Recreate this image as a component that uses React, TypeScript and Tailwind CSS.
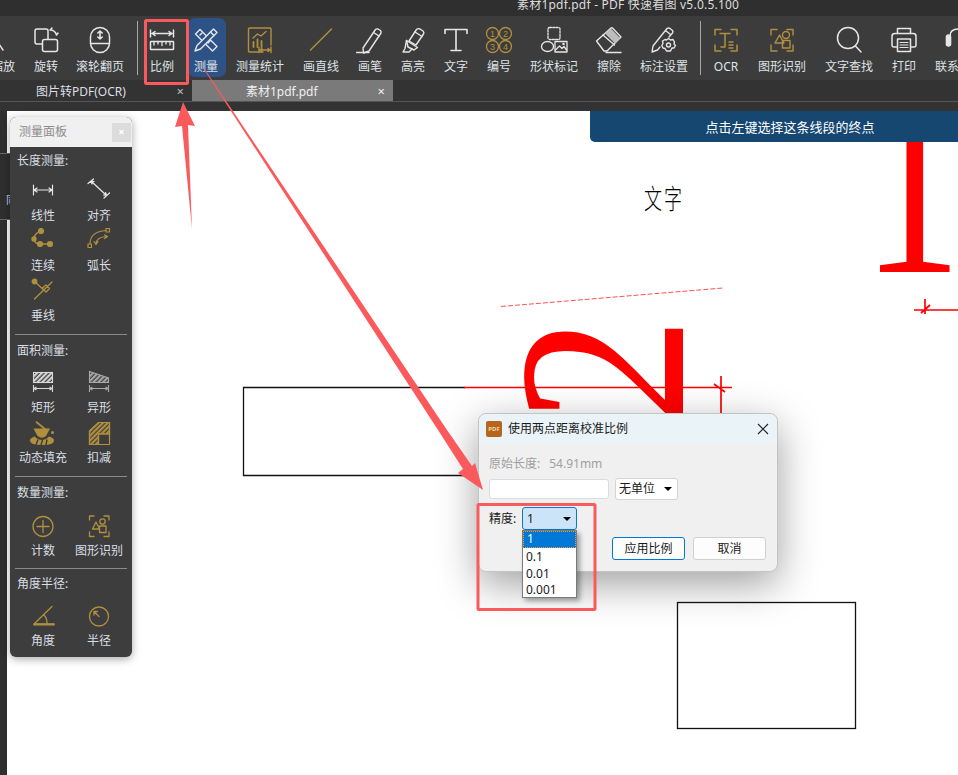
import React from "react";

const W = "#e6e6e6";
const G = "#b0903f";

function I({ c = W, s = 28, w = 1.5, children }: { c?: string; s?: number; w?: number; children: React.ReactNode }) {
  return (
    <svg width={s} height={s} viewBox={`0 0 ${s} ${s}`} fill="none" stroke={c} strokeWidth={w} strokeLinecap="round" strokeLinejoin="round">
      {children}
    </svg>
  );
}

const Corners = () => (
  <path d="M3 9V3.5H9M19 3.5H25V9M3 19V25H9M19 25H25V19" />
);

const tools: { label: string; w: string; icon: React.ReactNode }[] = [
  { label: "缩放", w: "w-[46px]", icon: <I><path d="M10 18 L14 24" /></I> },
  {
    label: "旋转", w: "w-[40px]", icon: (
      <I><rect x="3" y="3" width="13" height="15" rx="2" /><rect x="10.5" y="13.5" width="15" height="12" rx="2" fill="#3c3c3c" /><path d="M18 4 Q23 4 24.5 9M18 4 L20 2M24.5 9 L26 7" /></I>
    ),
  },
  {
    label: "滚轮翻页", w: "w-[68px]", icon: (
      <I><rect x="4.5" y="1.5" width="19" height="25" rx="9.5" /><path d="M4.5 17.5 H23.5" /><path d="M14 5V13M11.8 7 L14 5 L16.2 7M11.8 11 L14 13 L16.2 11" strokeWidth={1.6} /></I>
    ),
  },
  { label: "sep", w: "w-[6px]", icon: null },
  {
    label: "比例", w: "w-[44px]", icon: (
      <I><path d="M2.5 4V11M25.5 4V11M4 7.5H24M7 5.5 L4 7.5 L7 9.5M21 5.5 L24 7.5 L21 9.5" /><rect x="2.5" y="15.5" width="23" height="8" rx="0.5" /><path d="M6 15.5V19M10 15.5V18M14 15.5V19.5M18 15.5V18M22 15.5V19" strokeWidth={1.3} /></I>
    ),
  },
  {
    label: "测量", w: "w-[44px]", icon: (
      <I w={1.4}><path d="M3.5 8 L8 3.5 L25 20.5 L20.5 25 Z" /><path d="M8 9 L10 7M12 13 L14 11M16 17 L18 15" /><path d="M21.5 3 L25 6.5 L8.5 23 L3 25 L5 19.5 Z" fill="#2c5286" /><path d="M18.5 6 L22 9.5" /></I>
    ),
  },
  {
    label: "测量统计", w: "w-[64px]", icon: (
      <I c={G} w={1.4}><path d="M17 26 H3.5 Q2.5 26 2.5 25 V3 Q2.5 2 3.5 2 H24 Q25 2 25 3 V19" /><path d="M7 12 L11.5 8 L15 10 L20 5.5" /><path d="M7.5 21V16M11.5 21V13.5M15.5 21V15" strokeWidth={1.8} /><path d="M13 21.5V26.5M25 21V26.5M14 24H24M16 22.5 L14 24 L16 25.5M22 22.5 L24 24 L22 25.5" /></I>
    ),
  },
  { label: "画直线", w: "w-[58px]", icon: <I c={G}><path d="M3.5 24 L24.5 3" /></I> },
  {
    label: "画笔", w: "w-[40px]", icon: (
      <I w={1.4}><path d="M7 22 L19.5 3.5 Q20.5 2.5 22 3 L24.5 4.5 Q25.5 5.5 25 7 L13 25 L7.5 27 Z" /><path d="M17.5 6.5 L23 10" /><path d="M0.5 26.5 H13" /></I>
    ),
  },
  {
    label: "高亮", w: "w-[46px]", icon: (
      <I w={1.4}><path d="M10 15 L17.5 3.5 Q19 2 21 3 L24 5 Q25.5 6.5 24.5 8 L17 19 Z" /><path d="M7.5 14.5 L18.5 21.5 L15 24 L9 21 Z" /><path d="M7.5 14.5 L6 22.5 L4 26 L10 26 L13 23" /><path d="M16 6 L23 10.5" /></I>
    ),
  },
  {
    label: "文字", w: "w-[40px]", icon: (
      <I w={1.6}><path d="M3 7.5 V3.5 H25 V7.5M14 3.5 V24.5M9 24.5 H19" /></I>
    ),
  },
  {
    label: "编号", w: "w-[46px]", icon: (
      <svg width="28" height="28" viewBox="0 0 28 28" fill="none" stroke={G} strokeWidth="1.3">
        <circle cx="7.5" cy="7.5" r="6" /><circle cx="20.5" cy="7.5" r="6" /><circle cx="7.5" cy="20.5" r="6" /><circle cx="20.5" cy="20.5" r="6" />
        <g fill={G} stroke="none" fontSize="9" textAnchor="middle" fontFamily="'Liberation Sans',sans-serif">
          <text x="7.5" y="10.8">1</text><text x="20.5" y="10.8">2</text><text x="7.5" y="23.8">3</text><text x="20.5" y="23.8">4</text>
        </g>
      </svg>
    ),
  },
  {
    label: "形状标记", w: "w-[64px]", icon: (
      <I w={1.3}><rect x="8" y="1.5" width="12" height="12" rx="1.5" strokeDasharray="2 1.3" /><ellipse cx="7.5" cy="20.5" rx="6" ry="5" /><rect x="15" y="15.5" width="12" height="10.5" /><path d="M15.5 24 L19.5 20 L22 22.5 L24 20.5 L26.5 24" /><circle cx="23.5" cy="18" r="0.6" /></I>
    ),
  },
  {
    label: "擦除", w: "w-[46px]", icon: (
      <I w={1.4}><path d="M1.5 15 L16 2 Q17 1.5 18 2.5 L26 11 L12 25 H9 Z" fill="none" /><path d="M8 9 L19.5 19" /><path d="M10 7.5 L16 2.5 L25 12 L20 17.5 Z" fill="#bdbdbd" stroke="none" /><path d="M11 26.5 H26" /></I>
    ),
  },
  {
    label: "标注设置", w: "w-[64px]", icon: (
      <I w={1.4}><path d="M3 20 L17 2.5 Q18.5 1.5 20 2.5 L22.5 4.5 Q23.5 6 22.5 7 L19 11M3 20 L2 26 L7.5 24 L10 21M15.5 4.5 L20.5 8.5" /><circle cx="18.5" cy="19" r="2" /><path d="M18.5 12.5 L20.5 14 L23 13.5 L24.5 16 L24 18 L25.5 19.5 L24 22 L22 22 L20.5 25 H16.5 L15 22.5 L13 22 L11.8 19.5 L13 17.5 L12.5 15 L15 13.5 L16.5 14 Z" /></I>
    ),
  },
  { label: "sep", w: "w-[8px]", icon: null },
  {
    label: "OCR", w: "w-[44px]", icon: (
      <I c={G} w={1.5}><Corners /><path d="M8 7.5 H18M13 7.5 V21M9 21 H13M17 16 H21M17 19 H21M17 22 H21" /></I>
    ),
  },
  {
    label: "图形识别", w: "w-[68px]", icon: (
      <I c={G} w={1.4}><Corners /><path d="M11.5 9 L16 17 H7 Z" /><circle cx="18" cy="9" r="3.5" /><rect x="14.5" y="14.5" width="7.5" height="7.5" /></I>
    ),
  },
  {
    label: "文字查找", w: "w-[66px]", icon: (
      <I w={1.5}><circle cx="13" cy="12" r="10.5" /><path d="M20.5 20 L26 26" /></I>
    ),
  },
  {
    label: "打印", w: "w-[44px]", icon: (
      <I w={1.5}><path d="M7.5 7 V2.5 H20.5 V7" /><path d="M6.5 21 H4 Q2 21 2 19 V10 Q2 7.5 5 7.5 H23 Q26 7.5 26 10 V19 Q26 21 24 21 H21.5" /><rect x="7.5" y="13" width="13" height="12.5" /><path d="M10 16.5 H18M10 19 H18M10 21.5 H18" strokeWidth={1.2} /></I>
    ),
  },
  {
    label: "联系我们", w: "w-[66px]", icon: (
      <I w={1.6}><path d="M5 14 V10 Q5 3 14 3 Q23 3 23 10 V14" /><rect x="1.5" y="9" width="4" height="11" rx="2" fill={W} /></I>
    ),
  },
];

function Tool({ t }: { t: (typeof tools)[number] }) {
  if (t.label === "sep") {
    return (
      <div className={`${t.w} shrink-0 flex justify-center pt-[5px]`}>
        <div className="w-px h-[54px] bg-[#a8a8a8]" />
      </div>
    );
  }
  const active = t.label === "测量";
  return (
    <div className={`${t.w} shrink-0 relative flex flex-col items-center pt-[10px]`}>
      {active && <div className="absolute left-[4px] right-[2px] top-[2px] h-[59px] rounded-[7px] bg-[#2c5286]" />}
      <div className="relative h-[28px] w-[28px]">{t.icon}</div>
      <div className="relative mt-[4px] text-[12px] leading-[18px] whitespace-nowrap text-[#dfe3e6]">{t.label}</div>
    </div>
  );
}

const Hatch = ({ id, c }: { id: string; c: string }) => (
  <defs>
    <pattern id={id} width="3.4" height="3.4" patternUnits="userSpaceOnUse" patternTransform="rotate(45)">
      <rect width="1.6" height="3.4" fill={c} />
    </pattern>
  </defs>
);

const panel: { title: string; pt: string; gap: string; after: string; items: { label: string; icon: React.ReactNode }[] }[] = [
  {
    title: "长度测量:", pt: "pt-[1px]", gap: "mt-[3px]", after: "mt-[7px]", items: [
      { label: "线性", icon: <I w={1.2}><path d="M4.5 7 V17M23.5 7 V17M5 12 H23M8 10 L5 12 L8 14M20 10 L23 12 L20 14" /></I> },
      { label: "对齐", icon: <I w={1.2}><path d="M3 5.5 L8.5 1M19 20 L24.5 15M6 3 L21.5 17.5M9 3.5 L6 3 L7 6M20.5 14.5 L21.5 17.5 L18.5 17" /></I> },
      {
        label: "连续", icon: (
          <I c={G} w={1.4}><path d="M11 3 Q4 7 5 12 Q6 15 9 16 H20" /><circle cx="12" cy="3" r="2.4" fill={G} /><circle cx="5" cy="11" r="2" fill={G} /><circle cx="11" cy="16" r="2.4" fill={G} /><circle cx="21" cy="16" r="2.4" fill={G} /></I>
        ),
      },
      {
        label: "弧长", icon: (
          <I c={G} w={1.2}><rect x="21" y="0.5" width="3.5" height="3.5" /><rect x="3" y="16" width="3.5" height="3.5" /><path d="M5 16 Q5 3.5 21 2.5" /><path d="M11 16 Q11 9 22 8.5M19.5 7 L22.5 8.5 L19.5 10.5M9 13.5 L11 16.5 L13 13.5" /></I>
        ),
      },
      {
        label: "垂线", icon: (
          <I c={G} w={1.3}><circle cx="5.5" cy="3.5" r="2.3" fill={G} /><path d="M5.5 3.5 L17 14M5.5 21 L23 4M13 10.5 L17 7 L20.5 10.5 L17 14" /></I>
        ),
      },
    ],
  },
  {
    title: "面积测量:", pt: "pt-[3px]", gap: "mt-[5px]", after: "mt-[7px]", items: [
      {
        label: "矩形", icon: (
          <svg width="28" height="28" viewBox="0 0 28 28" fill="none" stroke="#d8d8d8" strokeWidth="1.1">
            <Hatch id="h1" c="#cfcfcf" />
            <rect x="4.5" y="2.5" width="19" height="10" fill="url(#h1)" />
            <path d="M4.5 15 V22M23.5 15 V22M5 18.5 H23M7.5 17 L5 18.5 L7.5 20M20.5 17 L23 18.5 L20.5 20" />
          </svg>
        ),
      },
      {
        label: "异形", icon: (
          <svg width="28" height="28" viewBox="0 0 28 28" fill="none" stroke="#a8a8a8" strokeWidth="1.1">
            <Hatch id="h2" c="#a8a8a8" />
            <path d="M4.5 1.5 L23.5 8 V12.5 H4.5 Z" fill="url(#h2)" />
            <path d="M4.5 15 V22M23.5 15 V22M5 18.5 H23M7.5 17 L5 18.5 L7.5 20M20.5 17 L23 18.5 L20.5 20" />
          </svg>
        ),
      },
      {
        label: "动态填充", icon: (
          <svg width="28" height="28" viewBox="0 0 28 28" fill={G} stroke="none">
            <path d="M7.5 1 L18 9.5 L16.5 10.5 L6.5 2.5 Z" />
            <path d="M4.5 8.5 H21 L17 16 Q13 19.5 8.5 16 Z" />
            <circle cx="23.5" cy="12.5" r="1.5" />
            <path d="M6 16.5 Q1 18 1 20.5 Q1 25 13.5 25 Q25 25 25 20.5 Q25 18 20 16.5 L18.5 18 Q13 22 7 18 Z" />
            <path d="M7 25 L9 19.5M12 25 L13.5 20M17 25 L18 19.5" stroke="#3d3d3d" strokeWidth="1.4" />
          </svg>
        ),
      },
      {
        label: "扣减", icon: (
          <svg width="28" height="28" viewBox="0 0 28 28" fill="none" stroke={G} strokeWidth="1.2">
            <Hatch id="h3" c={G} />
            <path d="M4.5 24.5 V11 L13.5 2.5 H24.5 V14 H13.5 V24.5 Z" fill="url(#h3)" />
            <path d="M4.5 24.5 V11 L13.5 2.5 H24.5 V24.5 Z" />
            <path d="M13.5 14 H24.5M13.5 14 V24.5" />
          </svg>
        ),
      },
    ],
  },
  {
    title: "数量测量:", pt: "pt-[3px]", gap: "mt-[6px]", after: "mt-[6px]", items: [
      { label: "计数", icon: <I c={G} w={1.3}><circle cx="14" cy="13.5" r="10" /><path d="M14 7.5 V19.5M8 13.5 H20" /></I> },
      {
        label: "图形识别", icon: (
          <I c={G} w={1.3}><path d="M4.5 7 V3H9M19 3H24V7M4.5 19V23.5H9M19 23.5H24V19" /><path d="M11 9 L14.5 16 H7.5 Z" /><circle cx="17.5" cy="8.5" r="2.7" /><rect x="14.5" y="13" width="6.5" height="6.5" /></I>
        ),
      },
    ],
  },
  {
    title: "角度半径:", pt: "pt-[2px]", gap: "mt-[5px]", after: "", items: [
      { label: "角度", icon: <I c={G} w={1.3}><path d="M23 3.5 L5 21 H25M15 12 Q18 15 18 20" /><path d="M5 21.5 H25" strokeWidth={1.8} /></I> },
      { label: "半径", icon: <I c={G} w={1.3}><circle cx="14" cy="13.5" r="9.5" /><path d="M14 13.5 L9 8.5M9 12 V8.5 H12.5" /></I> },
    ],
  },
];

function Panel() {
  return (
    <div className="absolute left-[10px] top-[117px] w-[122px] h-[540px] rounded-[6px] overflow-hidden bg-[#3d3d3d] shadow-[0_2px_8px_rgba(0,0,0,0.35)]">
      <div className="h-[30px] bg-[#f0f0f0] flex items-center pl-[9px] pr-[1px] justify-between">
        <span className="text-[12px] text-[#8c8c8c]">测量面板</span>
        <span className="w-[19px] h-[19px] bg-[#dcdcdc] text-white flex items-center justify-center text-[11px] font-bold">×</span>
      </div>
      {panel.map((sec, i) => (
        <div key={sec.title}>
          <div className={sec.pt}>
            <div className="h-[26px] pl-[7px] flex items-center text-[12px] text-[#d9dfe3]">{sec.title}</div>
          </div>
          <div className={`${sec.gap} pl-[5px] grid grid-cols-[56px_56px]`}>
            {sec.items.map((it) => (
              <div key={it.label} className="h-[50px] flex flex-col items-center">
                <div className="h-[26px] w-[28px] pt-[1px]">{it.icon}</div>
                <div className="h-[24px] leading-[26px] text-[12px] whitespace-nowrap text-[#d9dfe3]">{it.label}</div>
              </div>
            ))}
          </div>
          {i < panel.length - 1 && <div className={`${sec.after} mx-[5px] h-px bg-[#8a8a8a]`} />}
        </div>
      ))}
    </div>
  );
}

function Caret() {
  return <span className="w-0 h-0 border-x-[4px] border-x-transparent border-t-[4px] border-t-black" />;
}

function Dialog() {
  const opts = ["0.1", "0.01", "0.001"];
  return (
    <div className="absolute left-[478px] top-[413px] w-[300px] h-[159px] rounded-[8px] bg-[#f0f0f0] border border-[#c4c4c4] shadow-[0_12px_40px_rgba(0,0,0,0.38)] text-[12px] text-[#1a1a1a]">
      <div className="h-[30px] rounded-t-[8px] bg-[#eaf3f7] flex items-center pl-[7px] pr-[8px]">
        <span className="w-[16px] h-[16px] rounded-[2px] bg-[#b5651d] flex items-center justify-center text-[6px] font-bold text-[#f4d9a8] leading-none">PDF</span>
        <span className="ml-[6px] flex-1 text-[12px]">使用两点距离校准比例</span>
        <svg width="12" height="12" viewBox="0 0 12 12" stroke="#222" strokeWidth="1.1"><path d="M1 1 L11 11M11 1 L1 11" /></svg>
      </div>
      <div className="px-[10px]">
        <div className="mt-[10px] h-[20px] leading-[20px] text-[#a0a0a0] flex">
          <span>原始长度:</span>
          <span className="ml-[9px]">54.91mm</span>
        </div>
        <div className="mt-[4px] flex items-center gap-[6px]">
          <div className="w-[120px] h-[20px] bg-white border border-[#dcdcdc] rounded-[3px]" />
          <div className="w-[63px] h-[22px] bg-white border border-[#d4d4d4] rounded-[3px] flex items-center justify-between pl-[3px] pr-[5px]">
            <span>无单位</span>
            <Caret />
          </div>
        </div>
        <div className="relative mt-[7px] h-[23px] flex items-center">
          <span className="w-[33px]">精度:</span>
          <div className="w-[55px] h-[23px] bg-[#cce4f7] border border-[#1474c4] rounded-[3px] flex items-center justify-between pl-[4px] pr-[5px]">
            <span>1</span>
            <Caret />
          </div>
          <div className="absolute left-[33px] top-[23px] z-10 w-[55px] h-[68px] bg-white border border-[#7a7a7a] shadow-[3px_3px_5px_rgba(0,0,0,0.35)] leading-[17px]">
            <div className="h-[17px] bg-[#0078d7] text-white px-[3px] border border-dotted border-[#f0a030] leading-[14px]">1</div>
            {opts.map((o) => (
              <div key={o} className="h-[16.5px] px-[3px]">{o}</div>
            ))}
          </div>
        </div>
        <div className="mt-[7px] flex justify-end gap-[8px] pr-[1px]">
          <div className="w-[73px] h-[23px] bg-[#fdfdfd] border border-[#0078d7] rounded-[3px] flex items-center justify-center">应用比例</div>
          <div className="w-[73px] h-[23px] bg-[#fdfdfd] border border-[#d0d0d0] rounded-[3px] flex items-center justify-center">取消</div>
        </div>
      </div>
    </div>
  );
}

function Canvas() {
  return (
    <div className="relative flex-1 bg-white overflow-hidden">
      <span className="absolute left-[840px] top-[-57px] w-[130px] h-[260px] text-[260px] leading-[260px] text-[#ff0000] scale-x-[0.76] font-['Liberation_Serif',serif]">1</span>
      <span className="absolute left-[535px] top-[139px] w-[120px] h-[240px] text-[240px] leading-[240px] text-[#ff0000] font-['Liberation_Serif',serif] -rotate-90 scale-x-[0.88]">2</span>
      <span className="absolute left-[637px] top-[71px] text-[18px] leading-[30px] tracking-[2px] font-extralight text-black scale-y-150 font-['Noto_Sans_CJK_SC',serif]">文字</span>
      <svg className="absolute inset-0" width="951" height="664" viewBox="7 111 951 664" fill="none">
        <path d="M465 387.5 H243.5 V475.5 H480" stroke="#111" strokeWidth="1.3" />
        <path d="M501 306.5 L723 288" stroke="#ff5050" strokeWidth="1" strokeDasharray="5 2" />
        <path d="M464 387.5 H732M721 376 V420M714 384 L725 392" stroke="#f00" strokeWidth="1.7" />
        <path d="M914 310 H958M925 299 V314M921 313 L930 305" stroke="#f00" strokeWidth="1.7" />
        <rect x="677.5" y="602.5" width="178" height="126" stroke="#111" strokeWidth="1.3" />
      </svg>
      <div className="absolute left-[583px] top-0 w-[400px] h-[31px] pt-[2px] bg-[#164771] rounded-b-[5px] flex items-center justify-center text-[13px] text-white">
        点击左键选择这条线段的终点
      </div>
    </div>
  );
}

export default function App() {
  return (
    <div className="relative w-[958px] h-[775px] overflow-hidden flex flex-col bg-[#2f2f2f] font-['Noto_Sans','Noto_Sans_CJK_SC',sans-serif]">
      <div className="h-[16px] shrink-0 bg-[#2f2f2f] overflow-hidden pl-[517px] text-[12px] leading-[10px] tracking-[0.22px] text-[#dcdcdc] whitespace-nowrap">
        素材1pdf.pdf - PDF 快速看图 v5.0.5.100
      </div>
      <div className="h-[64px] shrink-0 bg-[#3c3c3c] flex overflow-hidden">
        <div className="flex ml-[-20px]">
          {tools.map((t, i) => (
            <Tool key={t.label + i} t={t} />
          ))}
        </div>
      </div>
      <div className="h-[22px] shrink-0 bg-[#333333] border-b border-[#555555] flex text-[12px] text-[#d9dfe3]">
        <div className="w-[192px] h-[21px] pt-[2px] flex items-center justify-between pl-[36px] pr-[8px]">
          <span>图片转PDF(OCR)</span>
          <span className="text-[#bdbdbd] text-[13px]">×</span>
        </div>
        <div className="w-[201px] h-[21px] pt-[2px] bg-[#7a7a7a] flex items-center justify-between pl-[54px] pr-[8px] text-[#f0f0f0]">
          <span>素材1pdf.pdf</span>
          <span className="text-[13px]">×</span>
        </div>
      </div>
      <div className="h-[9px] shrink-0 bg-[#333333]" />
      <div className="flex-1 flex">
        <div className="w-[7px] bg-[#2f2f2f]" />
        <Canvas />
      </div>

      <div className="absolute left-0 top-[153px] w-[12px] h-[67px] bg-[#2f2f2f] border-y border-[#6a6a6a] text-[11px] text-[#c8ccf0] leading-[12px] pl-[6px] pt-[40px] overflow-hidden">
        同
      </div>
      <Panel />
      <Dialog />

      <svg className="absolute inset-0 pointer-events-none" width="958" height="775" viewBox="0 0 958 775" fill="none">
        <rect x="145.5" y="20.5" width="42" height="63" rx="1" stroke="#fb5a5c" strokeWidth="3" />
        <rect x="478" y="504.5" width="117" height="105" rx="1" stroke="#fb5a5c" strokeWidth="3" />
        <path d="M183 102 L195 126 L188 125 L192 229 L182 126 L175 127 Z" fill="#fb5a5c" />
        <path d="M203 68 L204 68 L447 430 L472 466 L475 463 L483 490 L458 473 L463 469 L438 430 Z" fill="#fb5a5c" />
      </svg>
    </div>
  );
}
